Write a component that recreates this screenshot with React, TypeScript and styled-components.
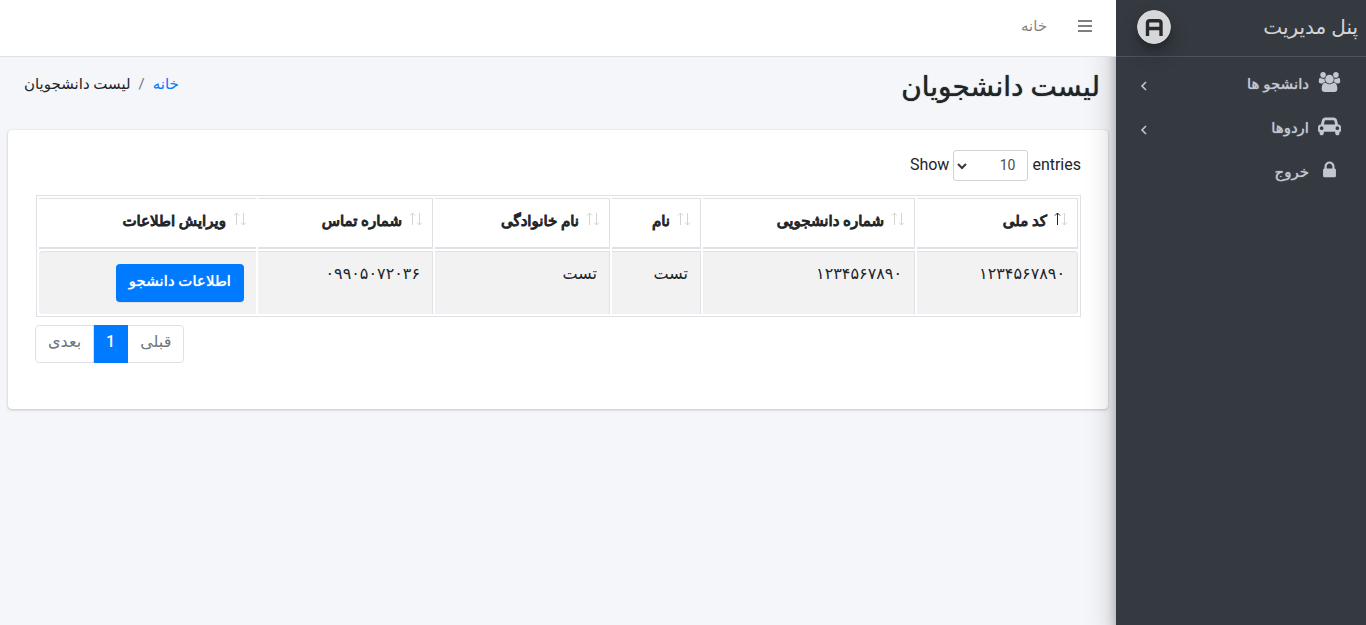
import React from "react";
import styled, { createGlobalStyle, css } from "styled-components";

const GlobalStyle = createGlobalStyle`
  *, *::before, *::after { box-sizing: border-box; }
  body {
    margin: 0;
    background: #f4f6f9;
    color: #212529;
    font: 400 16px/24px Roboto, "DejaVu Sans", sans-serif;
  }
  button, select { font: inherit; }
`;

const medium = css`
  text-shadow: 0 0 1px currentColor;
`;

const Wrapper = styled.div`
  display: flex;
  min-height: 100vh;
`;

const Sidebar = styled.aside`
  flex: 0 0 250px;
  background: #343a40;
  color: #c2c7d0;
  box-shadow: 0 14px 28px rgba(0, 0, 0, 0.25), 0 10px 10px rgba(0, 0, 0, 0.22);
  z-index: 1;
`;

const Brand = styled.a`
  display: flex;
  align-items: center;
  justify-content: space-between;
  height: 57px;
  padding: 0 8px 2px 21px;
  border-bottom: 1px solid #4b545c;
  color: rgba(255, 255, 255, 0.8);
  font-size: 20px;
  text-decoration: none;
`;

const Logo = styled.svg`
  width: 34px;
  height: 34px;
  border-radius: 50%;
  opacity: 0.8;
  box-shadow: 0 10px 20px rgba(0, 0, 0, 0.19), 0 6px 6px rgba(0, 0, 0, 0.23);
`;

const Menu = styled.nav`
  display: flex;
  flex-direction: column;
  gap: 4px;
  padding: 7px 8px;
`;

const MenuLink = styled.a`
  display: flex;
  align-items: center;
  gap: 8px;
  height: 40px;
  padding: 0 16px;
  color: #c2c7d0;
  font-size: 15px;
  text-decoration: none;
  ${medium}
`;

const MenuIcon = styled.svg`
  width: 25px;
  height: 20px;
  margin-bottom: 4px;
  fill: currentColor;
`;

const Chevron = styled.svg`
  width: 8px;
  height: 12px;
  margin-top: 4px;
  margin-right: auto;
  fill: none;
  stroke: currentColor;
  stroke-width: 1.6;
`;

const Main = styled.div`
  flex: 1;
  min-width: 0;
`;

const Topbar = styled.header`
  position: relative;
  z-index: 2;
  display: flex;
  align-items: center;
  gap: 30px;
  height: 57px;
  padding: 0 23px 4px;
  background: #fff;
  border-bottom: 1px solid #dee2e6;
`;

const IconButton = styled.button`
  display: flex;
  padding: 0;
  border: 0;
  background: none;
  color: rgba(0, 0, 0, 0.5);
`;

const TopLink = styled.a`
  color: rgba(0, 0, 0, 0.5);
  font-size: 15px;
  text-decoration: none;
`;

const PageHead = styled.div`
  display: flex;
  justify-content: space-between;
  align-items: flex-start;
  padding: 15px 16px 0 24px;
  height: 73px;
`;

const Title = styled.h1`
  margin: 0;
  font-size: 28px;
  line-height: 30px;
  font-weight: 500;
  ${medium}
`;

const Crumbs = styled.ol`
  display: flex;
  gap: 8px;
  margin: 0;
  padding: 0;
  list-style: none;
  font-size: 15px;
  a { color: #007bff; text-decoration: none; }
  li + li::before { content: "/"; color: #6c757d; margin-left: 8px; }
`;

const Card = styled.section`
  margin: 0 8px;
  padding: 20px 27px 46px;
  background: #fff;
  border-radius: 4px;
  box-shadow: 0 0 1px rgba(0, 0, 0, 0.125), 0 1px 3px rgba(0, 0, 0, 0.2);
`;

const Length = styled.label`
  display: flex;
  direction: ltr;
  justify-content: flex-end;
  gap: 4px;
  line-height: 29px;
`;

const SelectBox = styled.span`
  position: relative;
  display: flex;
  svg { position: absolute; left: 4px; top: 12px; }
`;

const LengthSelect = styled.select`
  width: 75px;
  height: 31px;
  padding: 0 12px;
  direction: rtl;
  appearance: none;
  border: 1px solid #ced4da;
  border-radius: 3px;
  background: none;
  color: #495057;
  font-size: 14px;
`;

const Table = styled.table`
  width: calc(100% - 1px);
  margin: 14px 0 8px 1px;
  table-layout: fixed;
  border: 1px solid #dee2e6;
  border-collapse: separate;
  border-spacing: 2px;
`;

const Col = styled.col<{ $w?: number }>`
  width: ${(p) => (p.$w ? p.$w + "px" : "auto")};
`;

const Th = styled.th`
  padding: 10px 9px 14px 12px;
  border: solid #dee2e6;
  border-width: 1px 1px 2px 0;
  text-align: right;
  font-size: 15px;
  font-weight: 400;
  line-height: 24px;
  white-space: nowrap;
  -webkit-text-stroke: 1px currentColor;
  &:last-child { border-right-width: 0; }
`;

const SortMark = styled.svg`
  display: inline-block;
  margin-left: 7px;
  vertical-align: 0;
`;

const Td = styled.td`
  padding: 12px;
  border: solid #dee2e6;
  border-width: 1px 1px 0 0;
  background: #f2f2f2;
  vertical-align: top;
  line-height: 20px;
  &:first-child { border-radius: 0 4px 4px 0; }
  &:last-child { border-right-width: 0; border-radius: 4px 0 0 4px; }
`;

const PrimaryButton = styled.button`
  display: block;
  height: 38px;
  padding: 0 13px 4px;
  border: 0;
  border-radius: 4px;
  background: #007bff;
  color: #fff;
  font-size: 15px;
  box-shadow: 0 1px 1px rgba(0, 0, 0, 0.075);
  ${medium}
`;

const Pager = styled.nav`
  display: flex;
  justify-content: flex-end;
`;

const PageButton = styled.button<{ $active?: boolean }>`
  height: 38px;
  padding: 0 12px 4px;
  margin-left: -1px;
  border: 1px solid ${(p) => (p.$active ? "#007bff" : "#dee2e6")};
  background: ${(p) => (p.$active ? "#007bff" : "#fff")};
  color: ${(p) => (p.$active ? "#fff" : "#6c757d")};
  font-weight: ${(p) => (p.$active ? 500 : 400)};
  &:first-child { border-radius: 0 4px 4px 0; }
  &:last-child { margin-left: 0; border-radius: 4px 0 0 4px; }
`;

const USERS =
  "M593 896q-162 5-265 128h-134q-82 0-138-40.5t-56-118.5q0-353 124-353 6 0 43.5 21t97.5 42.5 119 21.5q67 0 133-23-5 37-5 66 0 139 81 256zm1071 637q0 120-73 189.5t-194 69.5h-874q-121 0-194-69.5t-73-189.5q0-53 3.5-103.5t14-109 26.5-108.5 43-97.5 62-81 85.5-53.5 111.5-20q10 0 43 21.5t73 48 107 48 135 21.5 135-21.5 107-48 73-48 43-21.5q61 0 111.5 20t85.5 53.5 62 81 43 97.5 26.5 108.5 14 109 3.5 103.5zm-1024-1277q0 106-75 181t-181 75-181-75-75-181 75-181 181-75 181 75 75 181zm704 384q0 159-112.5 271.5t-271.5 112.5-271.5-112.5-112.5-271.5 112.5-271.5 271.5-112.5 271.5 112.5 112.5 271.5zm576 225q0 78-56 118.5t-138 40.5h-134q-103-123-265-128 81-117 81-256 0-29-5-66 66 23 133 23 59 0 119-21.5t97.5-42.5 43.5-21q124 0 124 353zm-128-609q0 106-75 181t-181 75-181-75-75-181 75-181 181-75 181 75 75 181z";
const CAR =
  "M480 1088q0-66-47-113t-113-47-113 47-47 113 47 113 113 47 113-47 47-113zm36-320h1016l-89-357q-2-8-14-17.5t-21-9.5h-768q-9 0-21 9.5t-14 17.5zm1372 320q0-66-47-113t-113-47-113 47-47 113 47 113 113 47 113-47 47-113zm160-96v384q0 14-9 23t-23 9h-96v128q0 80-56 136t-136 56-136-56-56-136v-128h-1024v128q0 80-56 136t-136 56-136-56-56-136v-128h-96q-14 0-23-9t-9-23v-384q0-93 65.5-158.5t158.5-65.5h28l105-419q23-94 104-157.5t179-63.5h768q98 0 179 63.5t104 157.5l105 419h28q93 0 158.5 65.5t65.5 158.5z";
const LOCK =
  "M640 768h512v-192q0-106-75-181t-181-75-181 75-75 181v192zm832 96v576q0 40-28 68t-68 28h-960q-40 0-68-28t-28-68v-576q0-40 28-68t68-28h32v-192q0-184 132-316t316-132 316 132 132 316v192h32q40 0 68 28t28 68z";

const menu = [
  { label: "دانشجو ها", path: USERS, box: "0 0 1920 1792", sub: true },
  { label: "اردوها", path: CAR, box: "0 0 2048 1792", sub: true },
  { label: "خروج", path: LOCK, box: "0 0 1792 1792", sub: false },
];

const columns = [
  { label: "کد ملی", width: 161, asc: true },
  { label: "شماره دانشجویی", width: 212 },
  { label: "نام", width: 89 },
  { label: "نام خانوادگی", width: 175 },
  { label: "شماره تماس", width: 175 },
  { label: "ویرایش اطلاعات" },
];

const student = ["۱۲۳۴۵۶۷۸۹۰", "۱۲۳۴۵۶۷۸۹۰", "تست", "تست", "۰۹۹۰۵۰۷۲۰۳۶"];

function Sort({ asc }: { asc?: boolean }) {
  return (
    <SortMark width="14" height="14" viewBox="0 0 14 14" fill="none">
      <path d="M3.5 13V1M1 3.5L3.5 1L6 3.5" stroke={asc ? "#212529" : "#d3d4d4"} />
      <path d="M10.5 1V13M8 10.5L10.5 13L13 10.5" stroke="#d3d4d4" />
    </SortMark>
  );
}

export default function App() {
  return (
    <Wrapper dir="rtl" lang="fa">
      <GlobalStyle />
      <Sidebar>
        <Brand href="#">
          <span>پنل مدیریت</span>
          <Logo viewBox="0 0 34 34">
            <circle cx="17" cy="17" r="17" fill="#fff" />
            <path
              d="M10.500 26V13Q10.500 10.700 12.800 10.700H21.700Q24 10.700 24 13V26M10.500 18.500H24"
              fill="none"
              stroke="#25282b"
              strokeWidth="3.400"
            />
          </Logo>
        </Brand>
        <Menu>
          {menu.map((m) => (
            <MenuLink href="#" key={m.label}>
              <MenuIcon viewBox={m.box}>
                <path d={m.path} />
              </MenuIcon>
              <span>{m.label}</span>
              {m.sub && (
                <Chevron viewBox="0 0 8 12">
                  <path d="M6 2L2 6L6 10" />
                </Chevron>
              )}
            </MenuLink>
          ))}
        </Menu>
      </Sidebar>
      <Main>
        <Topbar>
          <IconButton aria-label="منو">
            <svg width="16" height="14" viewBox="0 0 16 14" fill="currentColor">
              <path d="M1 1h14v2H1zM1 6h14v2H1zM1 11h14v2H1z" />
            </svg>
          </IconButton>
          <TopLink href="#">خانه</TopLink>
        </Topbar>
        <PageHead>
          <Title>لیست دانشجویان</Title>
          <Crumbs>
            <li><a href="#">خانه</a></li>
            <li>لیست دانشجویان</li>
          </Crumbs>
        </PageHead>
        <Card>
          <Length>
            Show
            <SelectBox>
              <LengthSelect defaultValue="10">
                <option>10</option>
                <option>25</option>
                <option>50</option>
                <option>100</option>
              </LengthSelect>
              <svg width="10" height="8" viewBox="0 0 10 8" fill="none" stroke="#343a40" strokeWidth="2">
                <path d="M1 2L5 6L9 2" />
              </svg>
            </SelectBox>
            entries
          </Length>
          <Table>
            <colgroup>
              {columns.map((c) => <Col key={c.label} $w={c.width} />)}
            </colgroup>
            <thead>
              <tr>
                {columns.map((c) => (
                  <Th key={c.label}>
                    <Sort asc={c.asc} />
                    {c.label}
                  </Th>
                ))}
              </tr>
            </thead>
            <tbody>
              <tr>
                {student.map((v, i) => <Td key={i}>{v}</Td>)}
                <Td><PrimaryButton>اطلاعات دانشجو</PrimaryButton></Td>
              </tr>
            </tbody>
          </Table>
          <Pager>
            <PageButton>قبلی</PageButton>
            <PageButton $active>1</PageButton>
            <PageButton>بعدی</PageButton>
          </Pager>
        </Card>
      </Main>
    </Wrapper>
  );
}
